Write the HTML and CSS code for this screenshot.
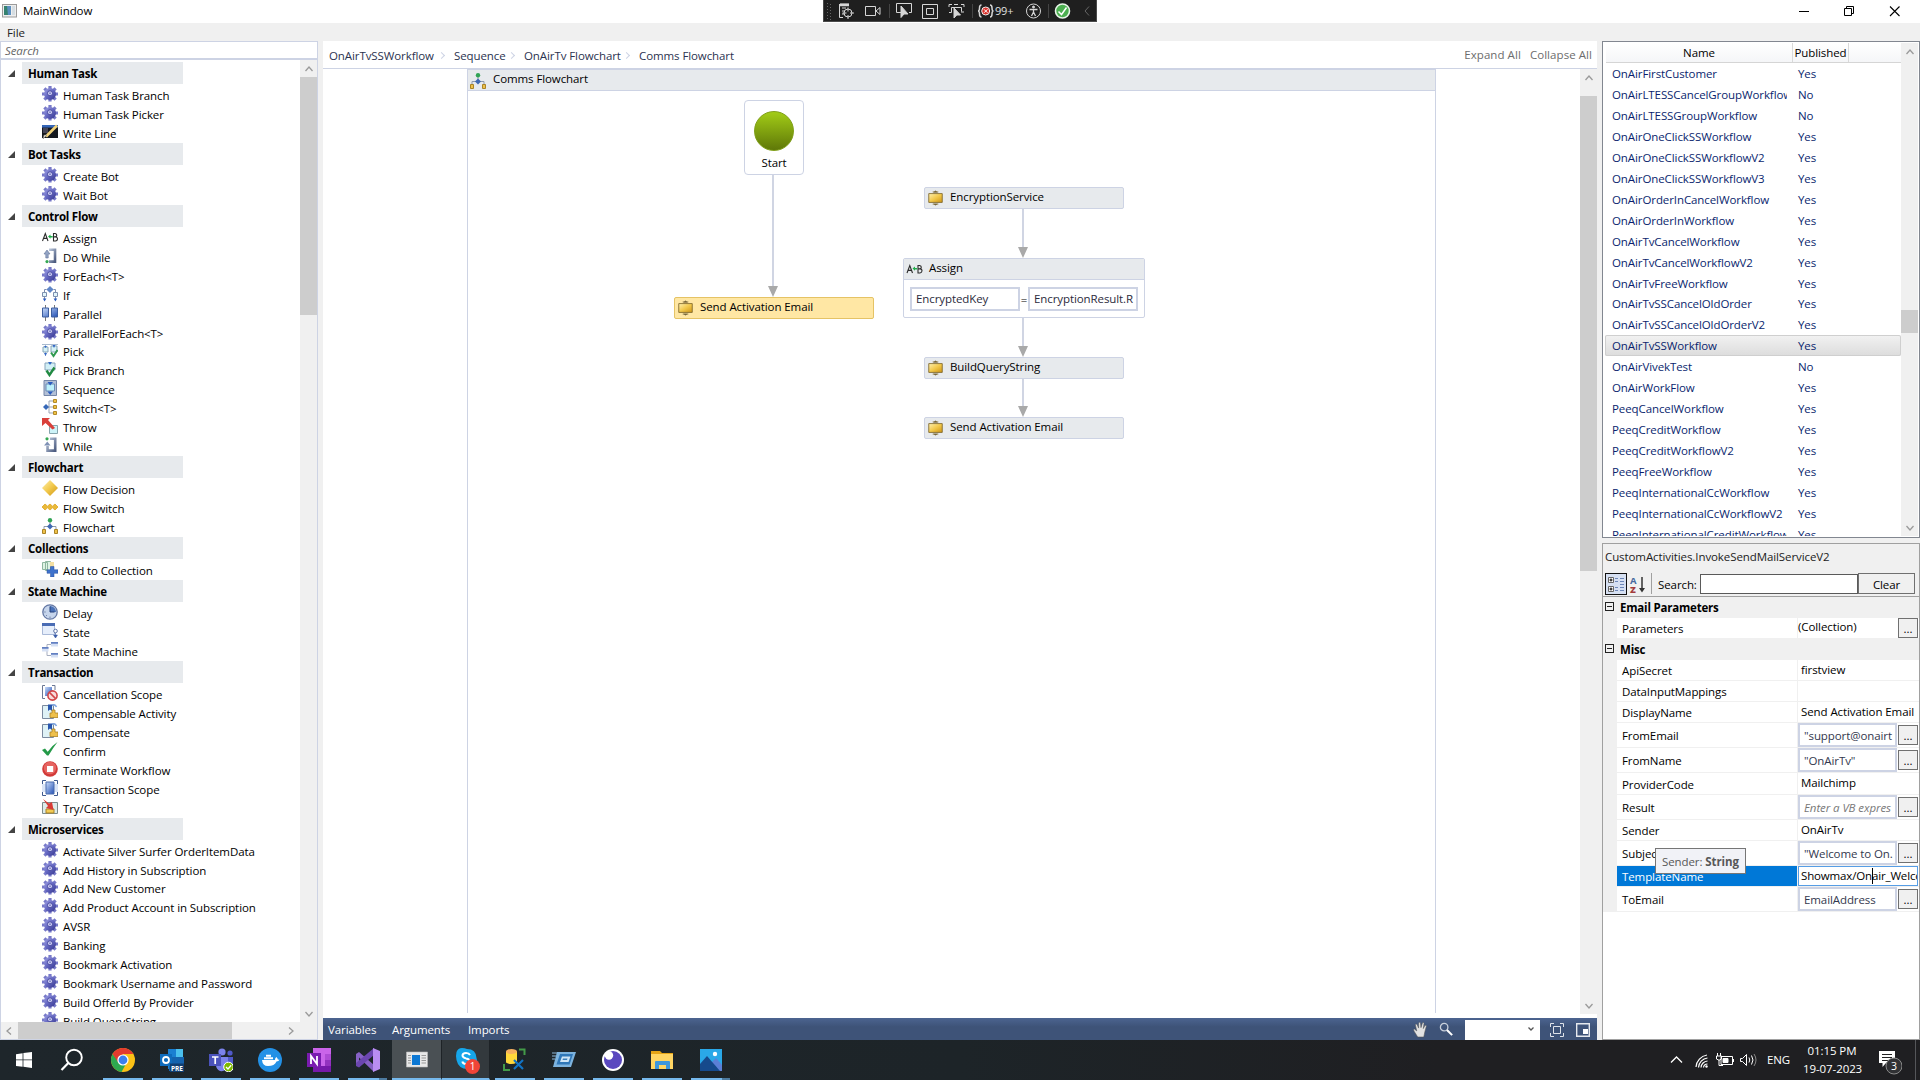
FILE: index.html
```html
<!DOCTYPE html>
<html lang="en">
<head>
<meta charset="utf-8">
<title>MainWindow</title>
<link rel="stylesheet" href="styles.css">
</head>
<body>
<svg class="defs" aria-hidden="true">
  <defs>
    <linearGradient id="gGear" x1="0" y1="0" x2="1" y2="1"><stop offset="0" stop-color="#a3a4e6"/><stop offset=".5" stop-color="#6265c0"/><stop offset="1" stop-color="#34358c"/></linearGradient>
    <linearGradient id="gGold" x1="0" y1="0" x2="1" y2="1"><stop offset="0" stop-color="#fff0b0"/><stop offset=".5" stop-color="#f2c94c"/><stop offset="1" stop-color="#cf9514"/></linearGradient>
    <linearGradient id="gBlue" x1="0" y1="0" x2="1" y2="1"><stop offset="0" stop-color="#c9dcfa"/><stop offset="1" stop-color="#2350b4"/></linearGradient>
    <linearGradient id="gSteel" x1="0" y1="0" x2="1" y2="1"><stop offset="0" stop-color="#bcc8dc"/><stop offset="1" stop-color="#4d5c80"/></linearGradient>
  </defs>
  <symbol id="gear" viewBox="0 0 16 16">
    <g stroke="#7779c8" stroke-width="3.200"><path d="M8 0v15.600M0 8h16"/><path d="M2.400 2.400l11.200 11.200M13.600 2.400L2.400 13.600"/></g>
    <circle cx="8" cy="8" r="6" fill="url(#gGear)"/><circle cx="8" cy="7.300" r="2.500" fill="#d5d6f6" stroke="#4648a0"/><circle cx="8" cy="7.300" r="1.100" fill="#8284cc"/>
  </symbol>
  <symbol id="writeline" viewBox="0 0 16 16"><path fill="#14181f" d="M0 1h16v13H0z"/><path fill="#3566b8" d="M0 1h16v2.600H0z"/><path fill="#445" d="M1 4h5v5H1z"/><path d="M15 1.500L4 12.500" stroke="#f1d27a" stroke-width="2.600"/><path d="M5 11l-4 4 1-4z" fill="#e8e0d0" stroke="#777" stroke-width=".5"/></symbol>
  <symbol id="assign" viewBox="0 0 16 16"><path d="M.5 12L3.300 4.500 6 12M1.500 9.400h3.800M11.500 4.500V12h2q2-.3 2-2.200t-2.200-1.900h-1.700 1.500q1.700-.3 1.700-1.700t-1.700-1.700z" fill="none" stroke="#2c2c2c" stroke-width="1.100"/><path d="M6 7.600l2.500-2v1.300h2.200v1.500H8.500v1.400z" fill="#1fae4b"/></symbol>
  <symbol id="dowhile" viewBox="0 0 16 16"><path d="M7 1.800h6v11.800H7" fill="none" stroke="url(#gSteel)" stroke-width="2.600"/><path d="M2 6l3-4 3 4H6.200v4H3.800V6z" fill="#93a4c4" stroke="#62749a" stroke-width=".6"/><circle cx="5" cy="13.600" r="1.600" fill="#35a853"/></symbol>
  <symbol id="while" viewBox="0 0 16 16"><path d="M8 1.800h5.200v11.800H5.500V9" fill="none" stroke="url(#gSteel)" stroke-width="2.600"/><path d="M2 8.500l3.300-4 3.200 4z" fill="#7f91b5"/><circle cx="5" cy="1.800" r="1.600" fill="#35a853"/></symbol>
  <symbol id="if" viewBox="0 0 16 16"><path d="M8 0l3.600 3.500L8 7 4.400 3.500z" fill="#5f86c8"/><path d="M4.500 3.500H2.500v10M11.500 3.500h2v10" fill="none" stroke="#7c8db0"/><path d="M.5 6.500h4v4h-4zM11.500 6.500h4v4h-4z" fill="#e2f4fa" stroke="#7d8fae"/><path d="M.8 12.500h3.600L2.600 15.500zM11.600 12.500h3.600l-1.800 3z" fill="#2a5cc0"/></symbol>
  <symbol id="parallel" viewBox="0 0 16 16"><path d="M3.500 0v16M12.500 0v16" stroke="#777"/><path d="M.5 3h6v9h-6zM9.500 3h6v9h-6z" fill="url(#gBlue)" stroke="#3e5f9f"/></symbol>
  <symbol id="pick" viewBox="0 0 16 16"><path d="M0 2.500h16M3.500 2.500V14" stroke="#aabbd0"/><path d="M1 5h5v5H1zM9 4h6v6H9z" fill="#d6f2f6" stroke="#87a5b8"/><path d="M2 4h3L3.500 6zM2 11h3l-1.500 3zM10.500 3h3L12 6z" fill="#3468c8"/><path d="M9 10.500l2.500 3.500 4-6" fill="none" stroke="#2f9a50" stroke-width="2"/></symbol>
  <symbol id="pickbranch" viewBox="0 0 16 16"><path d="M3 2h10v7H3z" fill="#d2f0f6" stroke="#88a5bb"/><path d="M6 1h4L8 4z" fill="#2f68c4"/><path d="M4.500 9.500l3 4.500 5-7.500" fill="none" stroke="#218a42" stroke-width="2.400"/></symbol>
  <symbol id="sequence" viewBox="0 0 16 16"><path d="M2 .5h12.500v15H2z" fill="#b3c0d6" stroke="#7687a8"/><path d="M4 4h8.500v7H4z" fill="#bdf0fa" stroke="#6b8bb6"/><path d="M5.500 2h5.500L8.200 5.500zM5.500 11.500h5.500L8.200 15z" fill="#2a5cc0"/></symbol>
  <symbol id="switch" viewBox="0 0 16 16"><path d="M4 8h8M12 2H7v12h5" fill="none" stroke="#9aa5b5"/><path d="M4 5l3 3-3 3-3-3z" fill="#3768b8"/><path d="M11.500.500h3v3h-3zM11.500 6.500h3v3h-3zM11.500 12.500h3v3h-3z" fill="#efc244" stroke="#b28a28"/></symbol>
  <symbol id="throw" viewBox="0 0 16 16"><path d="M7.500 7.500h8v8h-8z" fill="#cdf3f8" stroke="#86a5ad"/><path d="M0 0h8L6 2l7 8-2.500 1.500L3.500 5 0 8z" fill="#d9403a"/></symbol>
  <symbol id="decision" viewBox="0 0 16 16"><path d="M8 0l8 8-8 8-8-8z" fill="url(#gGold)"/></symbol>
  <symbol id="flowswitch" viewBox="0 0 16 16"><path d="M0 8l3-3 2.500 2.200L8 5l2.500 2.200L13 5l3 3-3 3-2.500-2.200L8 11 5.500 8.800 3 11z" fill="#e9b93a" stroke="#e3b23c"/></symbol>
  <symbol id="flowchart" viewBox="0 0 16 16"><path d="M8 3v6M2 12V8.500h12V12" fill="none" stroke="#8e99ab"/><circle cx="8" cy="2.200" r="2.200" fill="#31a455"/><path d="M8 5.500l3 3-3 3-3-3z" fill="#3f69b4"/><path d="M.5 11.500h3v4h-3zM12.500 11.500h3v4h-3z" fill="#eec14a" stroke="#aa8426"/></symbol>
  <symbol id="collection" viewBox="0 0 16 16"><path d="M.5 1.500h5v7h-5zM3.500.500h5v9h-5z" fill="#dff3e4" stroke="#8fb7a0"/><path d="M8 1h4v5H8z" fill="#f4dfa2"/><path d="M8.500 5.500h3.500v3.300h4v3.500h-4v3.700H8.500v-3.700H5V8.800h3.500z" fill="#3f72cc" stroke="#2a519c" stroke-width=".5"/></symbol>
  <symbol id="delay" viewBox="0 0 16 16"><circle cx="8" cy="8" r="7.200" fill="#c6d5ec" stroke="#6478a4" stroke-width="1.300"/><path d="M8 8V2a6 6 0 016 6z" fill="#4a72b8"/><path d="M8 2.500V8h4.500" fill="none" stroke="#25407a"/><path d="M8 12.500v1.500M2.200 8h1.500M4 12l1-1" stroke="#7888a8"/></symbol>
  <symbol id="state" viewBox="0 0 16 16"><path d="M.5.500h12v11H.5z" fill="#e6eefb" stroke="#a9b9d8"/><path d="M0 0h13v3H0z" fill="#4a6cb4"/><circle cx="13.500" cy="8" r="1.800" fill="#fff" stroke="#5d73a6"/><path d="M13.500 10v3M11.600 12h3.800l-1.900 3z" fill="#3a5ca8" stroke="#3a5ca8" stroke-width=".6"/></symbol>
  <symbol id="statemachine" viewBox="0 0 16 16"><path d="M5 5V2.500h4M5 9v4.500h4" fill="none" stroke="#a7aec0"/><path d="M0 5h6.500v4.500H0zM9 0h7v4.500H9zM9 11h7v4.500H9z" fill="#d5e0f4"/><path d="M0 5h6.500v1.700H0zM9 0h7v1.700H9zM9 11h7v1.700H9z" fill="#6380c2"/></symbol>
  <symbol id="cancelscope" viewBox="0 0 16 16"><path d="M3 .5H.5v13H3M10 .5h3V5" fill="none" stroke="#6b7894"/><path d="M3 2h7v9H3z" fill="url(#gBlue)"/><circle cx="10.500" cy="10.500" r="4.600" fill="#f6dcdc" stroke="#d24648" stroke-width="1.600"/><path d="M7.400 7.400l6.200 6.200" stroke="#d24648" stroke-width="1.600"/></symbol>
  <symbol id="compensate" viewBox="0 0 16 16"><path d="M.5 1.500h11v13H.5z" fill="#dff2f6" stroke="#7b8a9f"/><path d="M6 .5h4V7L8 5.500 6 7z" fill="#2856ae"/><path d="M10 1q3-1 4.500 2" fill="none" stroke="#7fa5e0" stroke-width="1.600"/><path d="M10 6h3v3h3v4.500H8V9h2z" fill="#eec04c" stroke="#ab8326" stroke-width=".8"/></symbol>
  <symbol id="confirm" viewBox="0 0 16 16"><path d="M0 8l3-1.500 2.700 3.200Q10 3.500 15.500 0 11 6 6.500 13.500H5z" fill="#249a48"/></symbol>
  <symbol id="terminate" viewBox="0 0 16 16"><circle cx="8" cy="8" r="7.800" fill="#d23a38"/><circle cx="8" cy="7" r="6.200" fill="#e66460"/><path d="M5 5h6.200v6H5z" fill="#fff"/></symbol>
  <symbol id="transscope" viewBox="0 0 16 16"><path d="M4 .5H.5V5M12 .5h3.500V5M4 15.500H.5V11M12 15.500h3.500V11" fill="none" stroke="#3f5a8e"/><path d="M0 4h16v8H0z" fill="#d9e4f6"/><path d="M4 2h8v12H4z" fill="url(#gBlue)" stroke="#4b6cae"/></symbol>
  <symbol id="trycatch" viewBox="0 0 16 16"><path d="M.5 3.500h15v11H.5z" fill="#dcebea" stroke="#7d8c8c"/><path d="M4 10h8v4H4z" fill="#f2cb54" stroke="#a98228"/><path d="M1 0l6 4.500L10 3l1.500 8L4 9l2-2z" fill="#d83c36"/></symbol>
  <symbol id="activity" viewBox="0 0 16 16"><path d="M5.500 2L8 0l2.500 2zM5.500 14L8 16l2.500-2z" fill="#5e4d22"/><path d="M5 1.500h6M5 14.500h6" stroke="#8b7a4a"/><path d="M.8 3.300h14.400v9.400H.8z" fill="url(#gGold)" stroke="#7d6528" stroke-width=".9"/></symbol>
  <symbol id="up" viewBox="0 0 10 10"><path d="M1.500 7L5 3l3.500 4" fill="none" stroke="#9a9a9a" stroke-width="1.300"/></symbol>
  <symbol id="down" viewBox="0 0 10 10"><path d="M1.500 3L5 7l3.500-4" fill="none" stroke="#9a9a9a" stroke-width="1.300"/></symbol>
</svg>

<header class="titlebar">
  <svg class="app-icon" viewBox="0 0 15 14"><rect x=".5" y=".5" width="14" height="12.500" fill="#eee" stroke="#9b9b9b"/><path d="M2 2h7v9H2z" fill="#35826f"/><path d="M5 2h4v9H6z" fill="#5a8fc0"/><path d="M10 2h3v9h-3z" fill="#d5dde2"/></svg>
  <span class="title">MainWindow</span>
  <svg class="win-buttons" viewBox="0 0 120 20"><path d="M9 10.500h10" stroke="#000"/><path d="M54.500 7.500h7v7h-7zM56.500 7.500v-2h7v7h-2" fill="none" stroke="#000"/><path d="M100 5.500l9.500 9.500M109.500 5.500L100 15" stroke="#000" stroke-width="1.100"/></svg>
</header>
<div class="debugbar">
  <svg viewBox="0 0 274 22" fill="none" stroke="#d6d6d6">
    <path d="M4.500 3v17M7.500 4v16" stroke="#666" stroke-dasharray="1 2"/>
    <path d="M17 4h9M16.500 4v13.500H20M19 8h4M19 11h3M19 14h2" /><path d="M17 5h9" stroke-width="2.500"/><circle cx="25" cy="13" r="4"/><path d="M25 7.500v4M25 15v4M19.500 13h4M27 13h4"/>
    <path d="M42.500 6.500h10v9h-10zM53 11l4-3.500v7z"/>
    <path d="M66.500 4v14M149.500 4v14M225.500 4v14" stroke="#444"/>
    <path d="M78 12.500h-4.500v-9h15v9H86"/><path d="M78 6l7 8h-4l-3 3.500z" fill="#d6d6d6"/>
    <path d="M99.500 4.500h15v14h-15zM103.500 8.500h7v6h-7z"/>
    <path d="M126 7V4.500h3M131 4.500h4M138 4.500h3V7M141 12h-3M128.500 7.500v5H126M128.500 7.500h10v4"/><path d="M131 8l6.500 7h-3.700L131 18z" fill="#d6d6d6"/>
    <path d="M158.500 5q-2 0-2 3 0 3-1.500 3 1.500 0 1.500 3t2 3M167 5q2 0 2 3 0 3 1.500 3-1.500 0-1.500 3t-2 3" stroke-width="1.500"/><circle cx="162.700" cy="11" r="4" fill="#d8322c" stroke="#eee"/><path d="M161 9.300l3.500 3.500M164.500 9.300l-3.500 3.500" stroke="#fff"/>
    <circle cx="210.500" cy="11" r="7"/><circle cx="210.500" cy="7" r="1" fill="#ddd"/><path d="M206.500 9.500h8M210.500 9.500V12l-2 4M210.500 12l2 4" stroke-width="1.300"/>
    <circle cx="239.500" cy="11" r="7" fill="#4caf50" stroke="#e8f4e8" stroke-width="1.600"/><path d="M235.500 11.500l3 3 5-7" stroke="#fff" stroke-width="1.500"/>
    <path d="M266 6.500l-4 4.500 4 4.500" stroke="#666"/>
  </svg>
  <span class="bug-count">99+</span>
</div>
<nav class="menubar">File</nav>

<main class="workspace">
  <aside class="toolbox">
    <div class="search">Search</div>
    <div class="toolbox-body">
      <div class="tree">
        <section><h3>Human Task</h3><ul>
          <li><svg><use href="#gear"/></svg>Human Task Branch</li>
          <li><svg><use href="#gear"/></svg>Human Task Picker</li>
          <li><svg><use href="#writeline"/></svg>Write Line</li></ul></section>
        <section><h3>Bot Tasks</h3><ul>
          <li><svg><use href="#gear"/></svg>Create Bot</li>
          <li><svg><use href="#gear"/></svg>Wait Bot</li></ul></section>
        <section><h3>Control Flow</h3><ul>
          <li><svg><use href="#assign"/></svg>Assign</li>
          <li><svg><use href="#dowhile"/></svg>Do While</li>
          <li><svg><use href="#gear"/></svg>ForEach&lt;T&gt;</li>
          <li><svg><use href="#if"/></svg>If</li>
          <li><svg><use href="#parallel"/></svg>Parallel</li>
          <li><svg><use href="#gear"/></svg>ParallelForEach&lt;T&gt;</li>
          <li><svg><use href="#pick"/></svg>Pick</li>
          <li><svg><use href="#pickbranch"/></svg>Pick Branch</li>
          <li><svg><use href="#sequence"/></svg>Sequence</li>
          <li><svg><use href="#switch"/></svg>Switch&lt;T&gt;</li>
          <li><svg><use href="#throw"/></svg>Throw</li>
          <li><svg><use href="#while"/></svg>While</li></ul></section>
        <section><h3>Flowchart</h3><ul>
          <li><svg><use href="#decision"/></svg>Flow Decision</li>
          <li><svg><use href="#flowswitch"/></svg>Flow Switch</li>
          <li><svg><use href="#flowchart"/></svg>Flowchart</li></ul></section>
        <section><h3>Collections</h3><ul>
          <li><svg><use href="#collection"/></svg>Add to Collection</li></ul></section>
        <section><h3>State Machine</h3><ul>
          <li><svg><use href="#delay"/></svg>Delay</li>
          <li><svg><use href="#state"/></svg>State</li>
          <li><svg><use href="#statemachine"/></svg>State Machine</li></ul></section>
        <section><h3>Transaction</h3><ul>
          <li><svg><use href="#cancelscope"/></svg>Cancellation Scope</li>
          <li><svg><use href="#compensate"/></svg>Compensable Activity</li>
          <li><svg><use href="#compensate"/></svg>Compensate</li>
          <li><svg><use href="#confirm"/></svg>Confirm</li>
          <li><svg><use href="#terminate"/></svg>Terminate Workflow</li>
          <li><svg><use href="#transscope"/></svg>Transaction Scope</li>
          <li><svg><use href="#trycatch"/></svg>Try/Catch</li></ul></section>
        <section><h3>Microservices</h3><ul>
          <li><svg><use href="#gear"/></svg>Activate Silver Surfer OrderItemData</li>
          <li><svg><use href="#gear"/></svg>Add History in Subscription</li>
          <li><svg><use href="#gear"/></svg>Add New Customer</li>
          <li><svg><use href="#gear"/></svg>Add Product Account in Subscription</li>
          <li><svg><use href="#gear"/></svg>AVSR</li>
          <li><svg><use href="#gear"/></svg>Banking</li>
          <li><svg><use href="#gear"/></svg>Bookmark Activation</li>
          <li><svg><use href="#gear"/></svg>Bookmark Username and Password</li>
          <li><svg><use href="#gear"/></svg>Build OfferId By Provider</li>
          <li><svg><use href="#gear"/></svg>Build QueryString</li></ul></section>
      </div>
      <div class="vscroll tool-v"><svg><use href="#up"/></svg><i class="thumb"></i><svg><use href="#down"/></svg></div>
      <div class="hscroll"><svg class="left"><use href="#up"/></svg><i class="thumb"></i><svg class="right"><use href="#up"/></svg></div>
      <div class="corner"></div>
    </div>
  </aside>

  <section class="designer">
    <div class="crumbs">
      <span class="c1">OnAirTvSSWorkflow</span><i></i><span class="c2">Sequence</span><i></i><span class="c3">OnAirTv Flowchart</span><i></i><span class="c4">Comms Flowchart</span>
      <div class="actions"><span>Expand All</span><span>Collapse All</span></div>
    </div>
    <div class="canvas-wrap">
      <div class="canvas">
        <div class="root-node">
          <div class="root-head"><svg><use href="#flowchart"/></svg>Comms Flowchart</div>
          <svg class="links" width="969" height="400" fill="none">
            <g stroke="#d0d5e3" stroke-width="2"><path d="M305 105v111M555 139v39M555 248v29M555 309v28"/></g>
            <g fill="#a9a9a9"><path d="M300 216h10l-5 11zM550 177h10l-5 11zM550 276h10l-5 11zM550 336h10l-5 11z"/></g>
          </svg>
          <div class="node start"><i></i>Start</div>
          <div class="node act send1"><svg><use href="#activity"/></svg>Send Activation Email</div>
          <div class="node act enc"><svg><use href="#activity"/></svg>EncryptionService</div>
          <div class="node assign">
            <div class="assign-head"><svg><use href="#assign"/></svg>Assign</div>
            <div class="assign-body"><div class="vb">EncryptedKey</div><b>=</b><div class="vb">EncryptionResult.R</div></div>
          </div>
          <div class="node act build"><svg><use href="#activity"/></svg>BuildQueryString</div>
          <div class="node act send2"><svg><use href="#activity"/></svg>Send Activation Email</div>
        </div>
      </div>
      <div class="vscroll design-v"><svg><use href="#up"/></svg><i class="thumb"></i><svg><use href="#down"/></svg></div>
    </div>
    <footer class="designer-bar">
      <span class="t1">Variables</span><span class="t2">Arguments</span><span class="t3">Imports</span>
      <svg class="hand" viewBox="0 0 16 18"><path d="M5 17L1 10.500q-1-2 .5-2L4 10.500 2.500 4q.8-1.500 1.800-.3L6 7.500 6 2q1-1.500 2 0l.5 5L10 2q1.200-1 1.800.3L11 8l1.800-3.500q1.500-.5 1.500.8L12.500 12l-1 5z" fill="#e2e2e2" stroke="#555" stroke-width=".6"/></svg>
      <svg class="mag" viewBox="0 0 16 16"><circle cx="5.500" cy="5.500" r="4" fill="none" stroke="#c9d0dc" stroke-width="1.400"/><path d="M8.500 8.500l5.500 5.500" stroke="#fff" stroke-width="2.200"/></svg>
      <div class="zoombox"><svg viewBox="0 0 10 10"><path d="M2.500 3.500L5 6l2.500-2.500" fill="none" stroke="#555" stroke-width="1.300"/></svg></div>
      <svg class="fit" viewBox="0 0 14 14" fill="none" stroke="#dfe3ea"><path d="M.5 4V.5H4M10 .5h3.500V4M.5 10v3.500H4M10 13.500h3.500V10M3.500 3.500h7v7h-7z"/></svg>
      <svg class="overview" viewBox="0 0 14 14"><path d="M.7.7h12.600v12.600H.7z" fill="none" stroke="#e6e9ee" stroke-width="1.400"/><path d="M7 6h5v5H7z" fill="#fff"/></svg>
    </footer>
  </section>

  <aside class="side">
    <div class="list">
      <div class="list-main">
        <div class="list-head"><span>Name</span><span>Published</span><span></span></div>
        <div class="rows">
          <div><span>OnAirFirstCustomer</span><em>Yes</em></div>
          <div><span>OnAirLTESSCancelGroupWorkflow</span><em>No</em></div>
          <div><span>OnAirLTESSGroupWorkflow</span><em>No</em></div>
          <div><span>OnAirOneClickSSWorkflow</span><em>Yes</em></div>
          <div><span>OnAirOneClickSSWorkflowV2</span><em>Yes</em></div>
          <div><span>OnAirOneClickSSWorkflowV3</span><em>Yes</em></div>
          <div><span>OnAirOrderInCancelWorkflow</span><em>Yes</em></div>
          <div><span>OnAirOrderInWorkflow</span><em>Yes</em></div>
          <div><span>OnAirTvCancelWorkflow</span><em>Yes</em></div>
          <div><span>OnAirTvCancelWorkflowV2</span><em>Yes</em></div>
          <div><span>OnAirTvFreeWorkflow</span><em>Yes</em></div>
          <div><span>OnAirTvSSCancelOldOrder</span><em>Yes</em></div>
          <div><span>OnAirTvSSCancelOldOrderV2</span><em>Yes</em></div>
          <div class="sel"><span>OnAirTvSSWorkflow</span><em>Yes</em></div>
          <div><span>OnAirVivekTest</span><em>No</em></div>
          <div><span>OnAirWorkFlow</span><em>Yes</em></div>
          <div><span>PeeqCancelWorkflow</span><em>Yes</em></div>
          <div><span>PeeqCreditWorkflow</span><em>Yes</em></div>
          <div><span>PeeqCreditWorkflowV2</span><em>Yes</em></div>
          <div><span>PeeqFreeWorkflow</span><em>Yes</em></div>
          <div><span>PeeqInternationalCcWorkflow</span><em>Yes</em></div>
          <div><span>PeeqInternationalCcWorkflowV2</span><em>Yes</em></div>
          <div><span>PeeqInternationalCreditWorkflow</span><em>Yes</em></div>
        </div>
      </div>
      <div class="vscroll list-v"><svg><use href="#up"/></svg><i class="thumb"></i><svg><use href="#down"/></svg></div>
    </div>

    <div class="props">
      <div class="props-title">CustomActivities.InvokeSendMailServiceV2</div>
      <div class="props-tools">
        <div class="cat-btn"><svg viewBox="0 0 18 18" width="18" height="18"><path d="M1.500 2.500h5v5h-5zM1.500 11.500h5v5h-5z" fill="#fff" stroke="#666"/><path d="M2.500 5h3M4 3.500v3M2.500 14h3M4 12.500v3" stroke="#000"/><path d="M8 3.500h3M8 6.500h3M8 12.500h3M8 15.500h3M13 3.500h4M13 6.500h4M13 9.500h4M13 12.500h4M13 15.500h4" stroke="#6d87b8"/></svg></div>
        <div class="sort"><div><span>A</span><b>Z</b></div><svg viewBox="0 0 8 18" width="8" height="18"><path d="M4 1v12" stroke="#333" stroke-width="1.500"/><path d="M1 12h6l-3 4.500z" fill="#333"/></svg></div>
        <i class="vsep"></i><label>Search:</label><div class="field"></div><div class="clear">Clear</div>
      </div>
      <div class="grid">
        <div class="cat"><i></i>Email Parameters</div>
        <div class="prop p21"><span>Parameters</span><div class="val coll">(Collection)</div><u>...</u></div>
        <div class="cat"><i></i>Misc</div>
        <div class="prop p21"><span>ApiSecret</span><div class="val">firstview</div></div>
        <div class="prop p21"><span>DataInputMappings</span><div class="val"></div></div>
        <div class="prop p21"><span>DisplayName</span><div class="val">Send Activation Email</div></div>
        <div class="prop p25"><span>FromEmail</span><div class="vb">"support@onairt</div><u>...</u></div>
        <div class="prop p25"><span>FromName</span><div class="vb">"OnAirTv"</div><u>...</u></div>
        <div class="prop p22"><span>ProviderCode</span><div class="val">Mailchimp</div></div>
        <div class="prop p25"><span>Result</span><div class="vb hint">Enter a VB expres</div><u>...</u></div>
        <div class="prop p21"><span>Sender</span><div class="val">OnAirTv</div></div>
        <div class="prop p25"><span>Subject</span><div class="vb">"Welcome to On.</div><u>...</u></div>
        <div class="prop p21 active"><span>TemplateName</span><div class="val edit">Showmax/On<i class="caret"></i>air_Welco</div></div>
        <div class="prop p25"><span>ToEmail</span><div class="vb">EmailAddress</div><u>...</u></div>
        <div class="tooltip">Sender: <b>String</b></div>
      </div>
    </div>
  </aside>
</main>

<footer class="taskbar">
  <div class="tb"><svg viewBox="0 0 24 24"><path d="M4 6.200L10.600 5.200v6.300H4zM11.400 5.100L20 4v7.500h-8.600zM4 12.300h6.600v6.500L4 17.900zM11.400 12.300H20V20l-8.600-1.200z" fill="#fff"/></svg></div>
  <div class="tb"><svg viewBox="0 0 24 24"><circle cx="14" cy="9.500" r="7.800" fill="none" stroke="#fff" stroke-width="1.900"/><path d="M8.300 15L1.500 22" stroke="#fff" stroke-width="2.200"/></svg></div>
  <div class="tb run"><svg viewBox="0 0 24 24"><circle cx="12" cy="12" r="12" fill="#fbc116"/><path d="M12 12h-5L1.600 6A12 12 0 0010.500 23.900l5-8.900z" fill="#2da94f"/><path d="M12 6h10.400A12 12 0 001.600 6L7 14z" fill="#e33b2e"/><circle cx="12" cy="12" r="5.600" fill="#fff"/><circle cx="12" cy="12" r="4.400" fill="#3c7fed"/></svg></div>
  <div class="tb run"><svg viewBox="0 0 24 24"><path d="M8 1h15v20H8z" fill="#1a7fd2"/><path d="M16 1h7v8h-7z" fill="#4bc0ee"/><path d="M9 9h15v14H9z" fill="#1563ae"/><path d="M0 6h12v12H0z" fill="#0f6cbd"/><circle cx="6" cy="12" r="3" fill="none" stroke="#fff" stroke-width="1.800"/><path d="M10 15.500h14V24H10z" fill="#123f72"/><text x="11" y="22.500" class="pre">PRE</text></svg></div>
  <div class="tb run"><svg viewBox="0 0 24 24"><circle cx="13" cy="4" r="3.600" fill="#7b83eb"/><circle cx="21" cy="5" r="2.600" fill="#5059c9"/><path d="M17 9h7v7q-1 4-6 4z" fill="#5059c9"/><path d="M7 9h12v9q-2 6-8 5-4-2-4-6z" fill="#7b83eb"/><path d="M0 6h12v12H0z" fill="#4b53bc"/><path d="M3 9h6.500M6.200 9v7" stroke="#fff" stroke-width="1.700"/><circle cx="19.500" cy="19" r="4.800" fill="#7eb900" stroke="#fff"/><path d="M17 19l2 2 3.200-3.700" fill="none" stroke="#fff" stroke-width="1.300"/></svg></div>
  <div class="tb run"><svg viewBox="0 0 24 24"><circle cx="12" cy="12" r="12" fill="#2391e6"/><path d="M4 12h13q0-2 1.300-3 1.500 1 1.500 2.500 1 0 1.700.3-.8 1.700-3 1.700Q16.500 18 10 18q-5.500 0-6-6z" fill="#fff"/><path d="M6 9.300h9v2H6zM8 6.800h5v2H8z" fill="#fff"/></svg></div>
  <div class="tb run"><svg viewBox="0 0 24 24"><path d="M6 0h18v24H6z" fill="#ca64ea"/><path d="M18 6h6v6h-6z" fill="#ae4bd5"/><path d="M18 12h6v6h-6z" fill="#9332bf"/><path d="M6 18h18v6H6z" fill="#7719aa"/><path d="M0 5h14v14H0z" fill="#7a1bb0"/><path d="M4 16V8l6 8V8" fill="none" stroke="#fff" stroke-width="1.800"/></svg></div>
  <div class="tb run multi"><svg viewBox="0 0 24 24"><path d="M0 6l3-2 15 13v7L3 9.500v6L0 18z" fill="#8661c5"/><path d="M0 18l3 1.500L18 7V0L0 15z" fill="#6b46b0"/><path d="M17 0l7 3v18l-7 3z" fill="#b98df2"/></svg></div>
  <div class="tb wide on"><svg viewBox="0 0 24 24"><path d="M1.500 4h21v15h-21z" fill="#e8e8e8" stroke="#bbb" stroke-width=".6"/><path d="M7 7h8v10H7z" fill="#0c78d4"/><path d="M3 7.500h3M3 10h3M3 12.500h3M3 15h3M16.500 7.500H21M16.500 10H21M16.500 12.500H21M16.500 15H21" stroke="#999"/></svg></div>
  <div class="tb wide skype"><svg viewBox="0 0 24 24"><path d="M7 0q3 0 5 1 9 0 9.500 9 2 6-1 9-4 4-8 2-9 0-11-9-1-4 0-8Q3 0 7 0z" fill="#16a6ea"/><path d="M15 7q-1-2-4-2-3.500 0-3.500 2.600 0 2 3.500 2.800 4 .8 4 3.100 0 2.700-4 2.500-3 0-3.700-2.500" fill="none" stroke="#fff" stroke-width="2"/></svg><span class="badge">1</span></div>
  <div class="tb run"><svg viewBox="0 0 24 24"><path d="M3 3.500v11q5 3 11 0v-11z" fill="#ffd83a"/><ellipse cx="8.500" cy="3.500" rx="5.500" ry="2.500" fill="#f5b060"/><path d="M16 1.500h5.500V7M1 16v6h6" fill="none" stroke="#439b48" stroke-width="2"/><path d="M11 12l9 9M20 12l-9 9" stroke="#1173c4" stroke-width="2.200"/></svg></div>
  <div class="tb run"><svg viewBox="0 0 24 24"><path d="M5 4h19l-5 15H1z" fill="#7db3de"/><path d="M8 6h13l-3.500 10.500h-13z" fill="#2f77b8"/><path d="M10 8.500h8.500l-2 5.500H8z" fill="#cfe5f6"/><path d="M11 10.500h4.500l-.5 1.500h-4.500z" fill="#3b7fb9"/><path d="M0 5h5M0 8h4M0 11h3" stroke="#8fb9da"/></svg></div>
  <div class="tb run"><svg viewBox="0 0 24 24"><circle cx="12" cy="12" r="11" fill="#fff"/><circle cx="12" cy="12" r="9" fill="#5a48bf"/><circle cx="8" cy="7.500" r="4.200" fill="#fff"/></svg></div>
  <div class="tb run"><svg viewBox="0 0 24 24"><path d="M1 3h9l2 2h11v16H1z" fill="#e5a416"/><path d="M1 6h22v15H1z" fill="#ffd563"/><path d="M5 21v-7q0-1 1-1h13q1 0 1 1v7h-4v-4H9v4z" fill="#3d97dc"/></svg></div>
  <div class="tb run multi"><svg viewBox="0 0 24 24"><path d="M1 1h22v22H1z" fill="#2aa8e8"/><circle cx="16" cy="6" r="2.200" fill="#fff"/><path d="M12 15l5-5 6 7v6h-8z" fill="#5b7fd6"/><path d="M1 16l7-8 13 15H1z" fill="#164a8c"/></svg></div>
  <div class="tray">
    <svg class="trayicons" viewBox="0 0 96 24" fill="none" stroke="#fff"><path d="M2 14.500l5.500-5.500 5.500 5.500" stroke-width="1.300"/><path d="M27 19a13 13 0 0111-12M29.500 19.500a10 10 0 019-9.500M32 19.500a7 7 0 016.500-6.500M34.500 19.500a4 4 0 014-3.500" stroke-width="1.200"/><circle cx="37.500" cy="18.500" r="1.200" fill="#fff" stroke="none"/><path d="M52 8.500h11.500v8H52zM64.500 11v3M48.500 5v3M51.500 5v3M47.500 8h5v3q-2.500 2.500-5 0zM50 12v5.500h4"/><path d="M54 10.500h5v4h-5z" fill="#fff"/><path d="M71.500 10.500h2l4-4v11l-4-4h-2z"/><path d="M80 9.500q1.500 2.500 0 5M82.500 7.500q3 4.500 0 9"/><path d="M85 6q4 6 0 12" stroke="#888"/></svg>
    <span class="lang">ENG</span>
    <div class="clock">01:15 PM<br>19-07-2023</div>
    <div class="notif"><svg viewBox="0 0 24 26"><path d="M1 2h16v12H8l-3.500 4v-4H1z" fill="#fff"/><path d="M4 5.500h10M4 8.500h10M4 11.500h6" stroke="#222"/><circle cx="16" cy="17" r="8" fill="#303134" stroke="#8a8a8a"/></svg><span>3</span></div>
    <i class="peek"></i>
  </div>
</footer>
</body>
</html>
```
FILE: styles.css
```css
* { box-sizing: border-box; }
body { margin: 0; width: 1920px; height: 1080px; overflow: hidden; display: flex; flex-direction: column; background: #f0f0f0; color: #000; font: 11.5px/16px "Open Sans", "Noto Sans", sans-serif; letter-spacing: -0.09px; white-space: nowrap; position: relative; }
svg { display: block; flex: none; }
.defs { position: absolute; width: 0; height: 0; }
i, em { font-style: normal; }

.titlebar { height: 23px; flex: none; background: #fff; display: flex; align-items: center; padding: 0 0 1px 2px; }
.app-icon { width: 15px; height: 14px; }
.title { margin-left: 6px; flex: 1; }
.win-buttons { width: 120px; height: 20px; margin-right: 10px; }
.debugbar { position: absolute; left: 823px; top: 0; width: 274px; height: 22px; background: #1f1f1f; border: 1px solid #4a4a4a; border-top: 0; }
.debugbar svg { width: 274px; height: 22px; margin-left: -1px; }
.bug-count { position: absolute; left: 171px; top: 3px; color: #e0e0e0; font-size: 11px; letter-spacing: -0.2px; }
.menubar { height: 18px; flex: none; padding-left: 7px; line-height: 19px; color: #222; }

.workspace { height: 999px; flex: none; display: flex; }

/* toolbox */
.toolbox { width: 318px; flex: none; display: flex; flex-direction: column; background: #fff; }
.search { height: 19px; border: 1px solid #cdd3e4; border-bottom-width: 2px; padding-left: 4px; line-height: 17px; font-style: italic; color: #666; }
.toolbox-body { flex: 1; min-height: 0; display: grid; grid-template-columns: 299px 17px; grid-template-rows: 962px 17px; border: 1px solid #cdd3e4; border-top: 0; }
.tree { overflow: hidden; padding: 2px 0 0 21px; }
.tree h3 { margin: 0 0 2px; width: 161px; height: 22px; padding-left: 6px; background: #e7eaed; font: bold 11.5px/23px "Open Sans", sans-serif; letter-spacing: -0.25px; position: relative; }
.tree h3::before { content: ""; position: absolute; left: -14px; top: 8px; border: solid transparent; border-width: 0 0 7px 7px; border-bottom-color: #444; }
.tree ul { list-style: none; margin: 0; padding: 0 0 0 20px; }
.tree li { height: 18.965px; display: flex; gap: 5px; line-height: 19px; }
.tree li svg { width: 16px; height: 16px; }

.vscroll { background: #f0f0f0; display: flex; flex-direction: column; align-items: center; }
.vscroll svg, .hscroll svg { width: 10px; height: 10px; }
.vscroll svg:last-child { margin-top: auto; margin-bottom: 3px; }
.thumb { background: #cdcdcd; display: block; }
.vscroll .thumb { width: 17px; }
.tool-v svg:first-child { margin: 4px 0 3px; }
.tool-v .thumb { height: 238px; }
.hscroll { background: #f0f0f0; display: flex; align-items: center; }
.hscroll .left { transform: rotate(-90deg); margin: 0 4px 0 3px; }
.hscroll .right { transform: rotate(90deg); margin-left: 54px; }
.hscroll .thumb { width: 214px; height: 17px; }
.corner { background: #f0f0f0; }

/* designer */
.designer { width: 1274px; margin-left: 5px; flex: none; display: flex; flex-direction: column; background: #fff; }
.crumbs { height: 28px; border-bottom: 1px solid #cdd3e4; display: flex; align-items: center; padding: 2px 5px 0 6px; color: #2b3350; }
.c1 { width: 108px; } .c2 { width: 53px; } .c3 { width: 98px; }
.crumbs i { width: 5px; height: 5px; border: solid #cdd3e4; border-width: 1.5px 1.5px 0 0; transform: rotate(45deg); margin: 0 10px 0 2px; }
.crumbs > span { flex: none; }
.actions { margin-left: auto; display: flex; gap: 9px; color: #6c6c6c; letter-spacing: 0.06px; margin-top: -1px; }
.canvas-wrap { height: 949px; flex: none; display: flex; }
.canvas { flex: 1; padding-left: 144px; }
.root-node { position: relative; width: 969px; height: 944px; border: 1px solid #cdd3e4; border-bottom: 0; }
.root-head { height: 21px; background: #e7eaed; border-bottom: 1px solid #cdd3e4; display: flex; align-items: center; gap: 7px; padding: 0 0 2px 2px; }
.root-head svg { width: 16px; height: 16px; margin-top: 3px; }
.links { position: absolute; left: 0; top: 0; }
.node { position: absolute; border: 1px solid #cdd3e4; border-radius: 2px; background: #fff; }
.start { left: 276px; top: 30px; width: 60px; height: 75px; border-radius: 4px; display: flex; flex-direction: column; align-items: center; }
.start i { width: 40px; height: 40px; border-radius: 50%; margin: 10px 0 4px; background: linear-gradient(#a2cc17, #5f7808); border: 1px solid #7f9f18; }
.act { width: 200px; height: 22px; background: #e7eaed; display: flex; align-items: center; gap: 7px; padding: 0 0 3px 3px; }
.act svg { width: 15px; height: 16px; margin-top: 3px; }
.send1 { left: 206px; top: 227px; background: #ffe7a4; border-color: #e5c365; }
.enc { left: 456px; top: 117px; }
.build { left: 456px; top: 287px; }
.send2 { left: 456px; top: 347px; }
.assign { left: 435px; top: 188px; width: 242px; height: 60px; }
.assign-head { height: 21px; background: #e7eaed; border-bottom: 1px solid #cdd3e4; display: flex; align-items: center; gap: 6px; padding: 0 0 3px 2px; }
.assign-head svg { width: 17px; height: 16px; margin-top: 3px; }
.assign-body { display: flex; padding: 7px 6px; }
.assign-body b { width: 8px; text-align: center; font-weight: normal; line-height: 25px; }
.vb { width: 110px; height: 24px; border: 2px solid #cdd3e4; padding: 0 4px; line-height: 20px; overflow: hidden; color: #2b2b3c; background: #fff; display: flex; }
.design-v { width: 17px; height: 945px; }
.design-v svg:first-child { margin: 4px 0 13px; }
.design-v .thumb { height: 475px; }
.designer-bar { height: 22px; flex: none; background: linear-gradient(#4c6490, #3e5378 40%); display: flex; align-items: center; color: #fff; padding: 1px 0 0 5px; }
.t1 { width: 64px; } .t2 { width: 76px; } .t3 { width: 60px; }
.hand { width: 15px; height: 17px; margin-left: 885px; }
.mag { width: 15px; height: 15px; margin-left: 11px; }
.zoombox { width: 75px; height: 20px; background: #fff; margin-left: 11px; padding: 4px 4px; display: flex; justify-content: flex-end; }
.zoombox svg { width: 10px; height: 10px; }
.fit { width: 14px; height: 14px; margin-left: 10px; }
.overview { width: 14px; height: 14px; margin-left: 12px; }

/* workflow list */
.side { width: 318px; margin-left: 5px; flex: none; display: flex; flex-direction: column; gap: 5px; }
.list { height: 497px; flex: none; border: 1px solid #828790; background: #fff; display: flex; padding: 1px; }
.list-main { width: 297px; height: 493px; overflow: hidden; padding-left: 1px; }
.list-head { height: 20px; display: flex; background: linear-gradient(#fff, #f5f6f8); border-bottom: 1px solid #d5d5d5; line-height: 20px; margin-left: 1px; }
.list-head span:nth-child(-n+2) { border-right: 1px solid #d9d9d9; text-align: center; }
.list-head span:nth-child(1) { width: 187px; }
.list-head span:nth-child(2) { width: 56px; }
.rows > div { height: 20.96px; display: flex; padding-left: 7px; line-height: 22px; color: #0a1f6e; border-radius: 2px; }
.rows span { width: 175px; overflow: hidden; margin-right: 11px; }
.rows .sel { box-shadow: inset 0 0 0 1px #cfcfcf; background: linear-gradient(#f2f2f2, #dcdcdc); }
.list-v { width: 17px; margin-left: auto; height: 493px; }
.list-v svg:first-child { margin: 4px 0 253px; }
.list-v .thumb { height: 23px; }

/* property grid */
.props { flex: 1; border: 1px solid #a0a0a0; background: #fff; display: flex; flex-direction: column; }
.props-title { height: 28px; background: #f0f0f0; padding-left: 2px; line-height: 25px; color: #222; }
.props-tools { height: 25px; background: #f0f0f0; display: flex; padding: 1px 3px 0 2px; border-bottom: 1px solid #a0a0a0; }
.cat-btn { width: 22px; height: 22px; border: 1.5px solid #111; background: #d6e0f2; padding: 1px; }
.sort { width: 24px; display: flex; align-items: center; padding-left: 3px; gap: 2px; font: bold 9.5px/9px "Open Sans", sans-serif; color: #46699f; }
.sort div { display: flex; flex-direction: column; }
.sort b { color: #a33c3c; }
.vsep { width: 1px; height: 21px; background: #a0a0a0; margin-right: 6px; }
.props-tools label { width: 42px; line-height: 23px; }
.field { width: 158px; height: 20px; border: 1px solid #5a5a5a; background: #fff; margin-top: 1px; }
.clear { width: 57px; height: 21px; border: 1px solid #707070; background: #f0f0f0; text-align: center; line-height: 21px; }
.grid { position: relative; display: flex; flex-direction: column; }
.cat { height: 21px; background: #f0f0f0; font-weight: bold; letter-spacing: -0.2px; display: flex; gap: 6px; padding-left: 2px; line-height: 22px; }
.cat i { width: 9px; height: 9px; border: 1px solid #222; margin-top: 5px; background: linear-gradient(#222, #222) center/5px 1px no-repeat; }
.prop { display: grid; grid-template-columns: 181px 100px 20px; border-left: 14px solid #f0f0f0; border-bottom: 1px solid #f0f0f0; width: 316px; }
.prop > span { border-right: 1px solid #f0f0f0; padding: 2px 0 0 5px; display: flex; align-items: center; }
.p21 { height: 21px; } .p22 { height: 22px; } .p25 { height: 25px; }
.prop .val { grid-column: 2 / 4; grid-row: 1; padding-left: 3px; line-height: 19px; overflow: hidden; }
.prop .coll { padding-left: 0; line-height: 18px; }
.prop u { grid-column: 3; grid-row: 1; width: 20px; height: 20px; border: 1px solid #707070; background: #f0f0f0; text-decoration: none; text-align: center; align-self: center; line-height: 20px; }
.prop .vb { width: 99px; height: 100%; color: #33384e; line-height: 21px; }
.prop .hint { font-style: italic; color: #777; }
.active > span { background: #0078d7; color: #fff; }
.prop .edit { border: 1px solid #569de5; padding-left: 2px; display: flex; line-height: 18px; letter-spacing: -0.15px; }
.caret { width: 1px; height: 16px; background: #000; flex: none; margin: 1px -1px 0 0; }
.tooltip { position: absolute; left: 52px; top: 251px; width: 91px; height: 26px; border: 1px solid #767676; background: #f1f2f7; color: #575757; padding-left: 6px; line-height: 26px; }

/* taskbar */
.taskbar { height: 40px; flex: none; display: flex; background: linear-gradient(90deg, #1e262b, #1d2428 50%, #1f1f22 75%); color: #fff; }
.tb { width: 49px; height: 40px; padding: 8px 12px; position: relative; flex: none; }
.tb:first-child { width: 48px; } .tb:nth-child(2) { width: 50px; }
.tb svg { width: 24px; height: 24px; }
.run { background: linear-gradient(#76b9ed, #76b9ed) 5px 38px/40px 2px no-repeat; padding-left: 13px; }
.multi { background: linear-gradient(#76b9ed, #76b9ed) 5px 38px/31px 2px no-repeat, linear-gradient(#4d7ba0, #4d7ba0) 36px 38px/8px 2px no-repeat; }
.wide { border-bottom: 2px solid #76b9ed; border-right: 1px solid #1e2327; }
.on { background: #4a5054; width: 50px; padding-left: 13px; }
.skype { background: #33393d; width: 48px; padding-left: 13px; }
.badge { position: absolute; right: 9px; bottom: 4px; width: 15px; height: 15px; border-radius: 50%; background: #f04438; font-size: 10px; line-height: 15px; text-align: center; }
.pre { font: bold 6.5px "Open Sans", sans-serif; fill: #fff; letter-spacing: 0; }
.tray { margin-left: auto; display: flex; align-items: center; }
.trayicons { width: 96px; height: 24px; margin-right: 2px; }
.lang { width: 36px; }
.clock { width: 58px; text-align: center; line-height: 18px; margin-top: -1px; }
.notif { position: relative; width: 24px; height: 26px; margin-left: 17px; margin-top: 3px; }
.notif span { position: absolute; left: 13px; top: 9px; font-size: 10.5px; }
.peek { width: 1px; height: 40px; background: #55565a; margin: 0 4px 0 13px; }
```
